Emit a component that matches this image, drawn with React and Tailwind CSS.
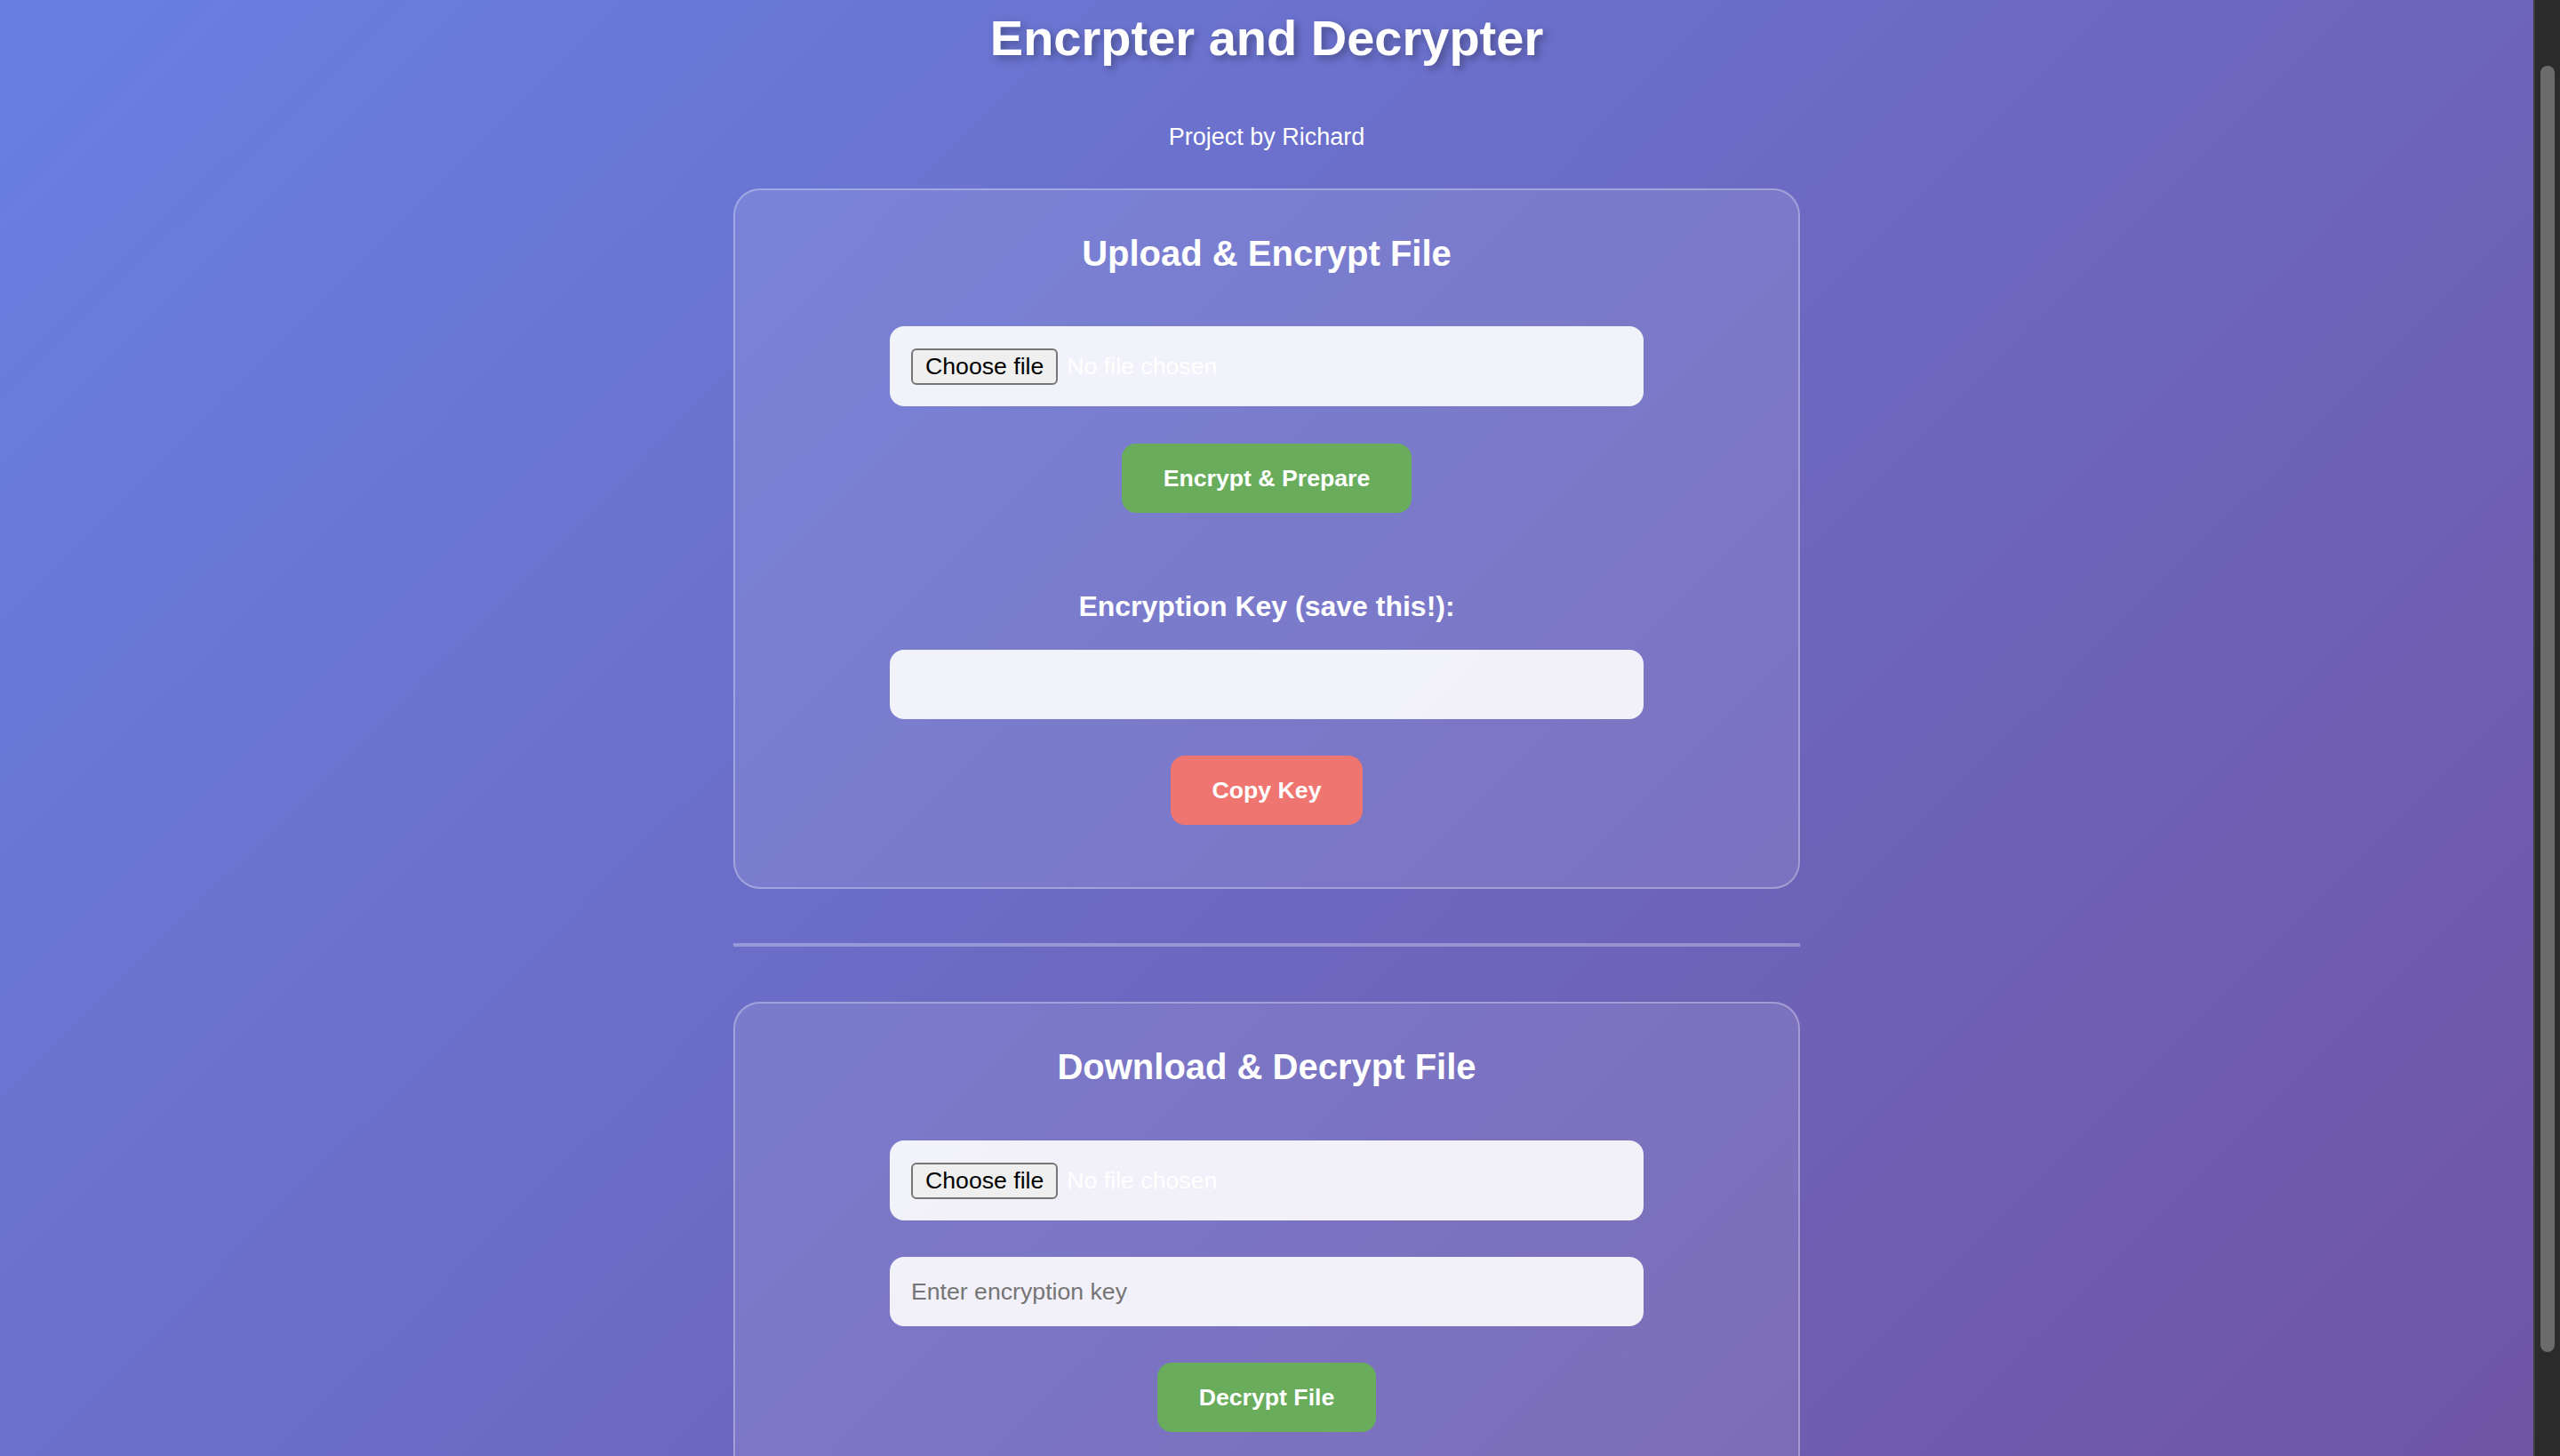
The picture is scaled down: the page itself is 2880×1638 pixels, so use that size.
import React from "react";

const FileField = () => (
  <div className="w-[848px] h-[90px] px-[24px] flex items-center gap-[10px] rounded-[16px] bg-white/90">
    <button
      type="button"
      className="h-[41px] px-[14px] rounded-[6px] border-2 border-[#767676] bg-[#efefef] text-black text-[26.67px] leading-none"
    >
      Choose file
    </button>
    <span className="text-white text-[26.67px] leading-none">No file chosen</span>
  </div>
);

const KeyField = ({ placeholder, className = "" }) => (
  <input
    readOnly
    placeholder={placeholder}
    className={`w-[848px] h-[78px] px-[24px] rounded-[16px] bg-white/90 text-[26.67px] text-[#333] placeholder:text-[#757575] outline-none ${className}`}
  />
);

const Action = ({ children, className = "" }) => (
  <button
    type="button"
    className={`h-[78px] px-[47px] rounded-[16px] text-white font-bold text-[26.67px] leading-none ${className}`}
  >
    {children}
  </button>
);

const Card = ({ title, children, className = "" }) => (
  <section
    className={`w-[1200px] shrink-0 rounded-[30px] border-2 border-white/30 bg-white/10 pt-[48px] pb-[70px] flex flex-col items-center ${className}`}
  >
    <h2 className="text-[40px] leading-[46px] font-bold text-white">{title}</h2>
    {children}
  </section>
);

export default function App() {
  return (
    <div className="h-screen flex bg-[linear-gradient(135deg,#6880e2_0%,#7054a4_100%)] font-['Liberation_Sans',Arial,sans-serif]">
      <main className="flex-1 overflow-hidden pt-[11px] pb-[88px] flex flex-col items-center">
        {/* Header */}
        <h1 className="text-[56px] leading-[64px] font-bold text-white [text-shadow:4px_4px_8px_rgba(0,0,0,0.3)]">
          Encrpter and Decrypter
        </h1>
        <p className="mt-[63px] text-[27px] leading-[32px] text-white">Project by Richard</p>

        {/* Encrypt */}
        <Card title="Upload & Encrypt File" className="mt-[42px]">
          <div className="mt-[59px]">
            <FileField />
          </div>
          <Action className="mt-[42px] bg-[#68ac5c]">Encrypt &amp; Prepare</Action>
          <h3 className="mt-[87px] text-[32px] leading-[37px] font-bold text-white">
            Encryption Key (save this!):
          </h3>
          <KeyField className="mt-[30px]" />
          <Action className="mt-[41px] bg-[#ef7570]">Copy Key</Action>
        </Card>

        <div className="mt-[61px] w-[1200px] h-[4px] shrink-0 bg-white/30" />

        {/* Decrypt */}
        <Card title="Download & Decrypt File" className="mt-[62px]">
          <div className="mt-[60px]">
            <FileField />
          </div>
          <KeyField placeholder="Enter encryption key" className="mt-[41px]" />
          <Action className="mt-[41px] bg-[#68ac5c]">Decrypt File</Action>
        </Card>
      </main>

      {/* Scrollbar */}
      <div className="w-[30px] shrink-0 bg-[#2b2b2b] border-l-2 border-[#3d3d3d] pt-[74px] pb-[117px] pl-[6px] pr-[6px] flex">
        <div className="flex-1 rounded-full bg-[#6b6b6b]" />
      </div>
    </div>
  );
}
